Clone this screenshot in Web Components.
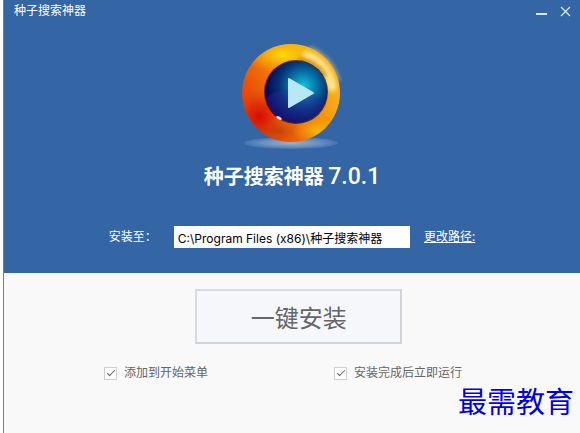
<!DOCTYPE html>
<html lang="zh-CN">
<head>
<meta charset="utf-8">
<title>种子搜索神器</title>
<style>
  body {
    margin: 0;
    background: #ffffff;
    color: #666666;
    font: 12px/16px "Noto Sans", "Noto Sans CJK SC", sans-serif;
  }
</style>
</head>
<body>
<installer-window></installer-window>

<script>
class TitleBar extends HTMLElement {
  constructor() {
    super();

    this._shadowRoot = this.attachShadow({ mode: 'open' });
    this._shadowRoot.innerHTML = `
      <style>
        :host {
          display: flex;
          align-items: center;
          justify-content: space-between;
          height: 22px;
          padding: 0 8px 0 10px;
        }

        .buttons {
          display: flex;
          gap: 10px;
        }

        button {
          display: flex;
          width: 14px;
          height: 14px;
          padding: 0;
          border: 0;
          background: none;
          color: #d5e8fc;
        }

        svg {
          fill: none;
          stroke: currentColor;
        }
      </style>
      <slot></slot>
      <div class="buttons">
        <button type="button" aria-label="最小化">
          <svg width="14" height="14"><path d="M2 10h11" stroke-width="2"/></svg>
        </button>
        <button type="button" aria-label="关闭">
          <svg width="14" height="14"><path d="M3 3l9 9M12 3l-9 9" stroke-width="1.3"/></svg>
        </button>
      </div>
    `;
  }
}

class PlayerLogo extends HTMLElement {
  constructor() {
    super();

    this._shadowRoot = this.attachShadow({ mode: 'open' });
    this._shadowRoot.innerHTML = `
      <style>
        :host {
          display: block;
        }

        svg {
          display: block;
          overflow: visible;
        }
      </style>
      <svg width="100" height="112" viewBox="1 0 100 112" aria-hidden="true">
        <defs>
          <linearGradient id="ring" x1="0.1" y1="0.8" x2="0.85" y2="0.3">
            <stop offset="0" stop-color="#e63a08"/>
            <stop offset="0.4" stop-color="#ee6c08"/>
            <stop offset="0.75" stop-color="#f49a0c"/>
            <stop offset="1" stop-color="#f8b020"/>
          </linearGradient>
          <radialGradient id="red">
            <stop offset="0" stop-color="#d40c04"/>
            <stop offset="0.45" stop-color="#dc2404" stop-opacity="0.75"/>
            <stop offset="1" stop-color="#e84808" stop-opacity="0"/>
          </radialGradient>
          <radialGradient id="yellow">
            <stop offset="0" stop-color="#fbdc08"/>
            <stop offset="1" stop-color="#f8b808" stop-opacity="0"/>
          </radialGradient>
          <radialGradient id="brown">
            <stop offset="0" stop-color="#a03808" stop-opacity="0.55"/>
            <stop offset="1" stop-color="#b84808" stop-opacity="0"/>
          </radialGradient>
          <radialGradient id="lens" cx="0.62" cy="0.4" r="0.6">
            <stop offset="0" stop-color="#10c4dc"/>
            <stop offset="0.3" stop-color="#0880b0"/>
            <stop offset="0.65" stop-color="#043478"/>
            <stop offset="1" stop-color="#05085c"/>
          </radialGradient>
          <radialGradient id="ground">
            <stop offset="0" stop-color="#b4b8b8" stop-opacity="0.9"/>
            <stop offset="0.6" stop-color="#86a4cc" stop-opacity="0.7"/>
            <stop offset="1" stop-color="#7098cc" stop-opacity="0.3"/>
          </radialGradient>
          <filter id="soft" x="-50%" y="-50%" width="200%" height="200%">
            <feGaussianBlur stdDeviation="2"/>
          </filter>
          <clipPath id="disc"><circle cx="50" cy="50" r="49"/></clipPath>
          <clipPath id="glass"><circle cx="55" cy="49" r="31"/></clipPath>
        </defs>
        <ellipse cx="50" cy="100" rx="47" ry="6" fill="url(#ground)"/>
        <path d="M68 5A49 49 0 0 1 97 38" fill="none" stroke="#ffe890" stroke-width="4" opacity="0.6" filter="url(#soft)"/>
        <circle cx="50" cy="50" r="49" fill="url(#ring)"/>
        <g clip-path="url(#disc)">
          <ellipse cx="42" cy="12" rx="38" ry="18" fill="url(#yellow)"/>
          <ellipse cx="18" cy="74" rx="27" ry="28" fill="url(#red)"/>
          <ellipse cx="38" cy="88" rx="22" ry="12" fill="url(#brown)"/>
          <ellipse cx="76" cy="88" rx="25" ry="14" fill="url(#yellow)" opacity="0.6"/>
          <path d="M66 13Q86 21 91 44" fill="none" stroke="#fff09c" stroke-width="9" stroke-linecap="round" opacity="0.9" filter="url(#soft)"/>
          <path d="M58 16Q76 18 85 34" fill="none" stroke="#c87004" stroke-width="3" filter="url(#soft)"/>
        </g>
        <circle cx="55" cy="49" r="32" fill="#401408" opacity="0.8"/>
        <circle cx="55" cy="49" r="31" fill="url(#lens)"/>
        <g clip-path="url(#glass)">
          <ellipse cx="51" cy="72" rx="34" ry="26" fill="#3028a0" opacity="0.35"/>
          <path d="M36 74A31 31 0 0 0 80 68" fill="none" stroke="#18a8a8" stroke-width="1" opacity="0.7"/>
        </g>
        <ellipse cx="38" cy="75" rx="3" ry="1.3" fill="#ffffff" opacity="0.85" transform="rotate(28 38 75)"/>
        <path d="M48 36L72 50 48 64Z" fill="#b8e8f8" stroke="#b8e8f8" stroke-width="2" stroke-linejoin="round"/>
      </svg>
    `;
  }
}

class InstallPath extends HTMLElement {
  constructor() {
    super();

    this._shadowRoot = this.attachShadow({ mode: 'open' });
    this._shadowRoot.innerHTML = `
      <style>
        :host {
          display: flex;
          align-items: center;
          justify-content: center;
          gap: 14px;
        }

        label {
          flex: none;
          padding-right: 3px;
        }

        input {
          box-sizing: border-box;
          width: 41%;
          height: 22px;
          padding: 0 4px;
          border: 0;
          background: #ffffff;
          color: #000000;
          font: 12px/16px Inter, "Noto Sans CJK SC", sans-serif;
        }

        a {
          flex: none;
          color: inherit;
        }
      </style>
      <label for="path">安装至：</label>
      <input id="path" type="text">
      <a href="#path">更改路径:</a>
    `;
    this._shadowRoot.querySelector('input').value = this.getAttribute('value');
  }
}

class InstallOption extends HTMLElement {
  constructor() {
    super();

    this._shadowRoot = this.attachShadow({ mode: 'open' });
    this._shadowRoot.innerHTML = `
      <style>
        :host {
          display: block;
        }

        label {
          display: flex;
          align-items: center;
          gap: 7px;
        }

        input {
          appearance: none;
          box-sizing: border-box;
          display: grid;
          place-items: center;
          width: 13px;
          height: 13px;
          margin: 0;
          border: 1px solid #d0d0d0;
          background: #ffffff;
        }

        input:checked::before {
          content: "";
          box-sizing: border-box;
          width: 8px;
          height: 4px;
          border: solid #606060;
          border-width: 0 0 1px 1px;
          transform: translateY(-1px) rotate(-45deg);
        }
      </style>
      <label><input type="checkbox" checked><slot></slot></label>
    `;
  }
}

class InstallerWindow extends HTMLElement {
  constructor() {
    super();

    this._shadowRoot = this.attachShadow({ mode: 'open' });
    this._shadowRoot.innerHTML = `
      <style>
        :host {
          position: relative;
          box-sizing: border-box;
          display: flex;
          flex-direction: column;
          min-height: 100vh;
          margin-left: 3px;
          border-left: 1px solid #7c7c7c;
          background: #f9f9f9;
        }

        header {
          padding-bottom: 25px;
          background: #3465a4;
          color: #ffffff;
        }

        player-logo {
          width: 100px;
          margin: 21px auto 7px;
        }

        h1 {
          margin: 0 0 35px;
          font: bold 20px/28px "Noto Sans CJK SC", sans-serif;
          text-align: center;
        }

        h1 span {
          font: 500 23px/28px Roboto, sans-serif;
        }

        main {
          padding: 16px 0;
        }

        .install {
          display: block;
          width: 36%;
          height: 55px;
          margin: 0 auto 21px 191px;
          padding: 0;
          border: 2px solid #d0d4d9;
          border-top-color: #d8dbe0;
          border-left-color: #d8dbe0;
          background: #f5f7fb;
          color: #666666;
          font: 24px/32px "Noto Sans CJK SC", sans-serif;
        }

        .options {
          display: grid;
          grid-template-columns: 1fr 1fr;
          padding: 0 16px 0 100px;
        }

        .mark {
          position: absolute;
          right: 6px;
          bottom: 13px;
          color: #0000e8;
          font: 29px/40px "Noto Sans CJK SC", sans-serif;
          text-shadow: 0 0 3px #ffffff, 0 0 3px #ffffff;
        }
      </style>
      <header>
        <title-bar>种子搜索神器</title-bar>
        <player-logo></player-logo>
        <h1>种子搜索神器 <span>7.0.1</span></h1>
        <install-path value="C:\\Program Files (x86)\\种子搜索神器"></install-path>
      </header>
      <main>
        <button type="button" class="install">一键安装</button>
        <div class="options">
          <install-option>添加到开始菜单</install-option>
          <install-option>安装完成后立即运行</install-option>
        </div>
      </main>
      <div class="mark">最需教育</div>
    `;
  }
}

customElements.define('title-bar', TitleBar);
customElements.define('player-logo', PlayerLogo);
customElements.define('install-path', InstallPath);
customElements.define('install-option', InstallOption);
customElements.define('installer-window', InstallerWindow);
</script>
</body>
</html>
